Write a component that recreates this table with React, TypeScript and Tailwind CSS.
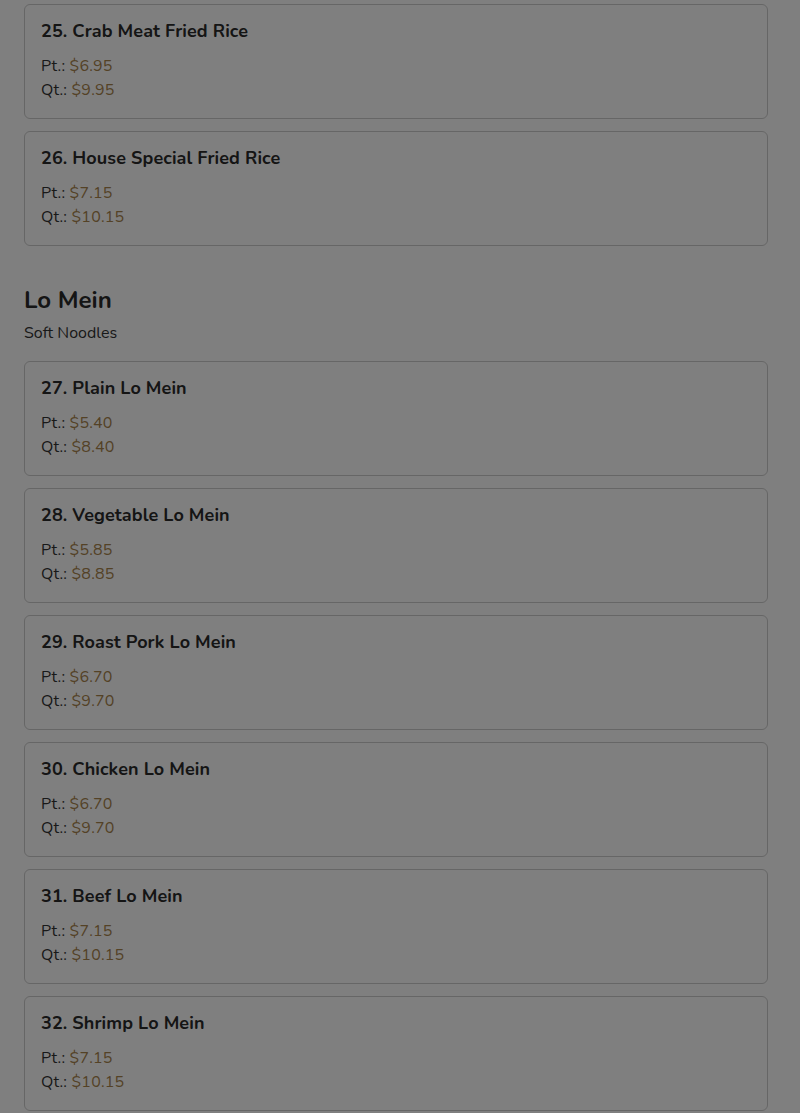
import React from "react";

interface Dish {
  no: number;
  name: string;
  pt: string;
  qt: string;
}

const friedRice: Dish[] = [
  { no: 25, name: "Crab Meat Fried Rice", pt: "$6.95", qt: "$9.95" },
  { no: 26, name: "House Special Fried Rice", pt: "$7.15", qt: "$10.15" },
];

const loMein: Dish[] = [
  { no: 27, name: "Plain Lo Mein", pt: "$5.40", qt: "$8.40" },
  { no: 28, name: "Vegetable Lo Mein", pt: "$5.85", qt: "$8.85" },
  { no: 29, name: "Roast Pork Lo Mein", pt: "$6.70", qt: "$9.70" },
  { no: 30, name: "Chicken Lo Mein", pt: "$6.70", qt: "$9.70" },
  { no: 31, name: "Beef Lo Mein", pt: "$7.15", qt: "$10.15" },
  { no: 32, name: "Shrimp Lo Mein", pt: "$7.15", qt: "$10.15" },
];

function DishCard({ dish }: { dish: Dish }) {
  return (
    <div className="mb-3 rounded-md border border-[#cccccc] bg-white p-4">
      <h3 className="mb-[13px] text-lg font-bold leading-5 tracking-[0.1px] text-[#2a2a2a]">
        {dish.no}. {dish.name}
      </h3>
      <div className="text-base leading-6 tracking-[0.2px] text-[#333333]">
        Pt.: <span className="text-[#a8844c]">{dish.pt}</span>
      </div>
      <div className="text-base leading-6 tracking-[0.2px] text-[#333333]">
        Qt.: <span className="text-[#a8844c]">{dish.qt}</span>
      </div>
    </div>
  );
}

export default function App() {
  return (
    <div className="relative min-h-screen bg-white font-['Nunito','Noto_Sans',sans-serif]">
      <div className="pl-6 pr-8 pt-1">
        {friedRice.map((d) => (
          <DishCard key={d.no} dish={d} />
        ))}

        {/* Lo Mein section */}
        <h2 className="mt-[38px] text-2xl font-bold leading-8 text-[#2a2a2a]">Lo Mein</h2>
        <p className="mt-[5px] mb-4 text-base leading-6 text-[#333333]">Soft Noodles</p>
        {loMein.map((d) => (
          <DishCard key={d.no} dish={d} />
        ))}
      </div>

      {/* modal backdrop */}
      <div className="fixed inset-0 bg-black/50" />
    </div>
  );
}
